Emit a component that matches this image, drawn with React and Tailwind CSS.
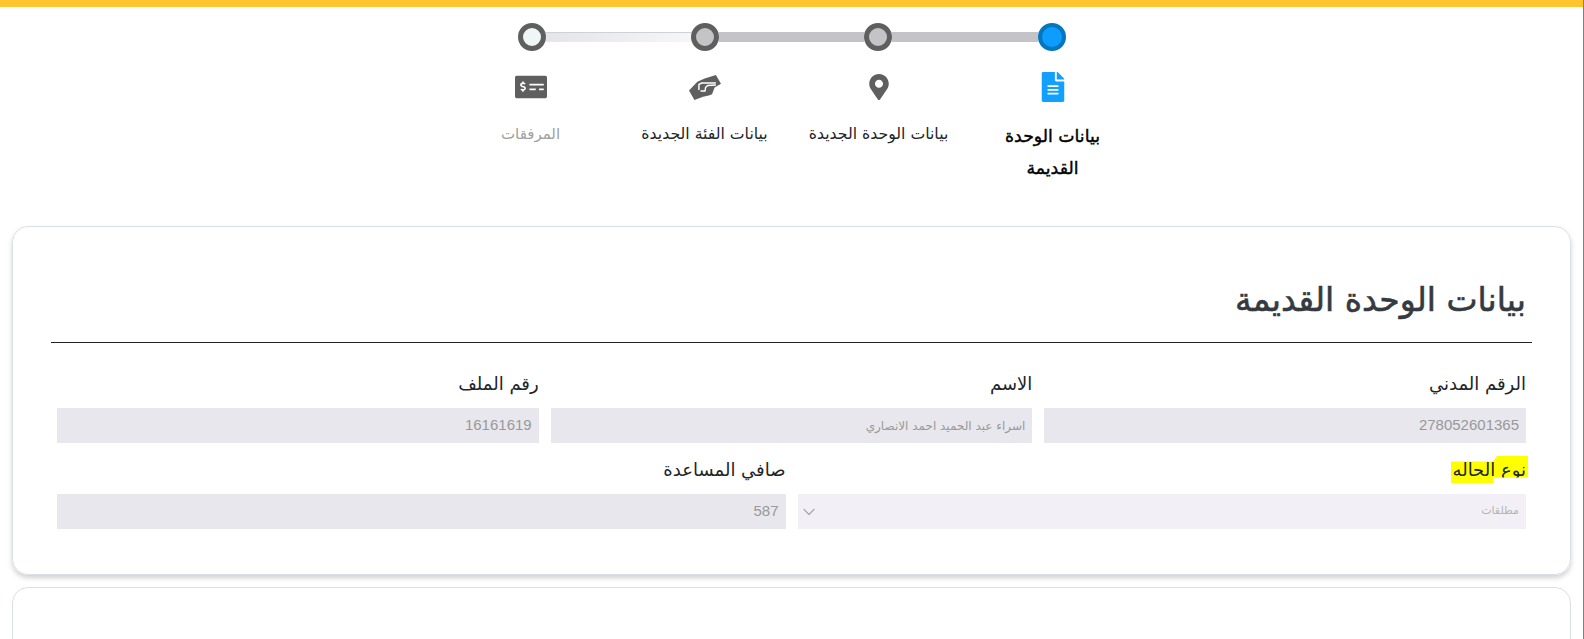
import { FaFileAlt, FaMapMarkerAlt, FaMoneyCheckAlt } from 'react-icons/fa';
import { ChevronDown } from 'lucide-react';

// the handshake in the reference is a tilted solid blob with an S-shaped gap
function HandshakeIcon({ className }) {
    return (
        <svg viewBox="0 0 100 78" className={className}>
            <path fill="currentColor" d="M84 0 L100 27 L80 39 L72 60 L62 64 L44 68 L17 78 L0 48 L26 21 L49 11 Z" />
            <path fill="none" stroke="#fff" strokeWidth="4.5" strokeLinejoin="round" d="M31 47 L31 29 L40 25 L84 25 M84 31 L58 33 L52 38 L50 50 L36 50" />
        </svg>
    );
}

const steps = [
    { label: 'بيانات الوحدة القديمة', Icon: FaFileAlt, iconClass: 'text-[#12a0ff] text-[30px]', labelClass: 'text-black text-[17.3px] [-webkit-text-stroke:0.4px_#000] leading-[32px] w-[130px] mt-[15px]' },
    { label: 'بيانات الوحدة الجديدة', Icon: FaMapMarkerAlt, iconClass: 'text-[#5f5f5f] text-[26px]', labelClass: 'text-[#212529] text-[15.7px] leading-[24px] mt-[17px]' },
    { label: 'بيانات الفئة الجديدة', Icon: HandshakeIcon, iconClass: 'text-[#5f5f5f] w-[32px] h-[25px]', labelClass: 'text-[#212529] text-[15.7px] leading-[24px] mt-[17px]' },
    { label: 'المرفقات', Icon: FaMoneyCheckAlt, iconClass: 'text-[#5f5f5f] text-[32px]', labelClass: 'text-[#a0a0a0] text-[15px] leading-[24px] mt-[17px]' },
];

function Field({ label, value, small, highlight, select, light }) {
    return (
        <div className="flex flex-col">
            <label className="flex h-[27px] mb-[11px] items-center text-[18px] text-[#212529]">
                {highlight ? (
                    <span className="bg-[#ffff00] leading-[27px] pr-[2px] -mr-[2px] pl-[2px] [clip-path:polygon(0_20%,55%_20%,60%_0,100%_0,100%_80%,55%_80%,55%_100%,0_100%)]">{label}</span>
                ) : (
                    <span>{label}</span>
                )}
            </label>
            <div className={`flex h-[35px] items-center justify-between pr-[7px] pl-px ${light ? 'bg-[#f2f0f6]' : 'bg-[#e7e7ed]'}`}>
                <span
                    className={`${small ? (light ? 'text-[11px] text-[#b5b5b5]' : 'text-[12px] text-[#999]') : 'text-[15px] text-[#999]'}`}
                    style={{ fontFamily: small ? undefined : '"Liberation Sans", sans-serif' }}
                >
                    {value}
                </span>
                {select && <ChevronDown size={20} strokeWidth={1.5} className="text-[#aaa]" />}
            </div>
        </div>
    );
}

export default function App() {
    return (
        <div dir="rtl" className="h-[639px] overflow-hidden bg-white border-r border-[#2196f3]" style={{ fontFamily: '"DejaVu Sans", sans-serif' }}>
            <div className="h-[7px] bg-[#ffc42e]" />

            {/* Stepper */}
            <div className="mx-auto w-[548px] mt-[16px] flex items-center">
                <span className="size-[28px] shrink-0 rounded-full border-[4px] border-[#0277bd] bg-[#0d9cff]" />
                <span className="h-[10px] flex-1 bg-[#c4c4c8]" />
                <span className="size-[28px] shrink-0 rounded-full border-[5px] border-[#5f5f5f] bg-[#c4c4c6]" />
                <span className="h-[10px] flex-1 bg-[#c4c4c8]" />
                <span className="size-[28px] shrink-0 rounded-full border-[5px] border-[#5f5f5f] bg-[#c4c4c6]" />
                <span className="h-[10px] flex-1 border-t border-[#cfd2d2] bg-gradient-to-l from-[#f6f6f8] to-[#e4e4ea]" />
                <span className="size-[28px] shrink-0 rounded-full border-[5px] border-[#5f5f5f] bg-[#eef6f6]" />
            </div>
            <div className="mx-auto w-[696px] h-[175px] flex">
                {steps.map(({ label, Icon, iconClass, labelClass }) => (
                    <div key={label} className="flex-1 flex flex-col items-center text-center">
                        <div className="h-[36px] mt-[18px] flex items-center justify-center">
                            <Icon className={iconClass} />
                        </div>
                        <div className={labelClass}>{label}</div>
                    </div>
                ))}
            </div>

            {/* Old unit card */}
            <div className="mx-[12px] h-[349px] rounded-[16px] border border-[#dcdfe8] shadow-[0_3px_5px_rgba(0,0,0,0.18)] px-[38px]">
                <h2 className="h-[116px] pt-[49px] px-[6px] text-[33px] leading-[48px] font-normal [-webkit-text-stroke:0.6px_#343a40] text-[#343a40] border-b border-[#222]">
                    بيانات الوحدة القديمة
                </h2>
                <div className="px-[6px] pt-[27px]">
                    <div className="grid grid-cols-3 gap-x-[12px]">
                        <Field label="الرقم المدني" value="278052601365" />
                        <Field label="الاسم" value="اسراء عبد الحميد احمد الانصاري" small />
                        <Field label="رقم الملف" value="16161619" />
                    </div>
                    <div className="grid grid-cols-2 gap-x-[12px] mt-[13px]">
                        <Field label="نوع الحاله" value="مطلقات" small highlight select light />
                        <Field label="صافي المساعدة" value="587" />
                    </div>
                </div>
            </div>

            {/* Next card, cut off by the window */}
            <div className="mx-[12px] mt-[12px] h-[200px] rounded-[16px] border border-[#dcdfe8]" />
        </div>
    );
}
